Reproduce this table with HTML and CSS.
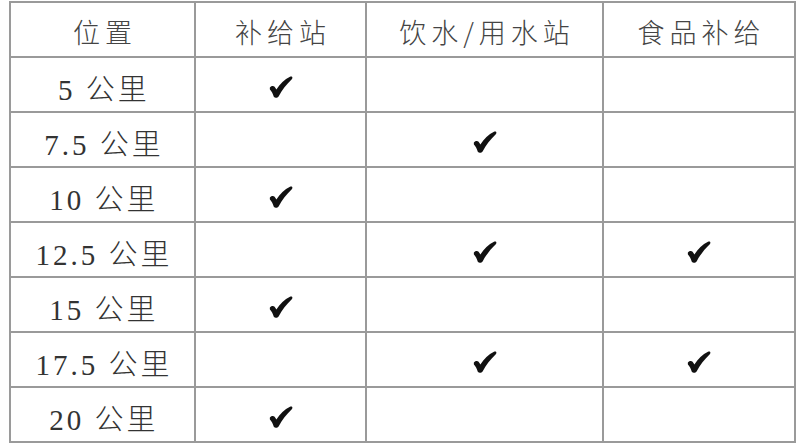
FILE: index.html
```html
<!DOCTYPE html>
<html lang="zh">
<head>
<meta charset="utf-8">
<link rel="stylesheet" href="styles.css">
</head>
<body>
<table class="grid">
  <colgroup>
    <col class="c-pos"><col class="c-sup"><col class="c-water"><col class="c-food">
  </colgroup>
  <thead>
    <tr><th>位置</th><th>补给站</th><th>饮水/用水站</th><th>食品补给</th></tr>
  </thead>
  <tbody>
    <tr><td class="lbl">5 公里</td><td><svg class="chk" viewBox="0 0 24 22"><path d="M0.8,11.8 C1.8,9.8 4.4,9.4 5.6,10.8 L7.4,13.4 C11,8 15.5,3.2 21,0.8 C23,0 24.2,1.6 22.8,3.2 C17.5,8.2 13,14 9.6,20.4 C8.6,22 6,22.4 4.8,20.8 C3.8,17.6 2.6,15 0.9,13.4 Z"/></svg></td><td></td><td></td></tr>
    <tr><td class="lbl">7.5 公里</td><td></td><td><svg class="chk" viewBox="0 0 24 22"><path d="M0.8,11.8 C1.8,9.8 4.4,9.4 5.6,10.8 L7.4,13.4 C11,8 15.5,3.2 21,0.8 C23,0 24.2,1.6 22.8,3.2 C17.5,8.2 13,14 9.6,20.4 C8.6,22 6,22.4 4.8,20.8 C3.8,17.6 2.6,15 0.9,13.4 Z"/></svg></td><td></td></tr>
    <tr><td class="lbl">10 公里</td><td><svg class="chk" viewBox="0 0 24 22"><path d="M0.8,11.8 C1.8,9.8 4.4,9.4 5.6,10.8 L7.4,13.4 C11,8 15.5,3.2 21,0.8 C23,0 24.2,1.6 22.8,3.2 C17.5,8.2 13,14 9.6,20.4 C8.6,22 6,22.4 4.8,20.8 C3.8,17.6 2.6,15 0.9,13.4 Z"/></svg></td><td></td><td></td></tr>
    <tr><td class="lbl">12.5 公里</td><td></td><td><svg class="chk" viewBox="0 0 24 22"><path d="M0.8,11.8 C1.8,9.8 4.4,9.4 5.6,10.8 L7.4,13.4 C11,8 15.5,3.2 21,0.8 C23,0 24.2,1.6 22.8,3.2 C17.5,8.2 13,14 9.6,20.4 C8.6,22 6,22.4 4.8,20.8 C3.8,17.6 2.6,15 0.9,13.4 Z"/></svg></td><td><svg class="chk" viewBox="0 0 24 22"><path d="M0.8,11.8 C1.8,9.8 4.4,9.4 5.6,10.8 L7.4,13.4 C11,8 15.5,3.2 21,0.8 C23,0 24.2,1.6 22.8,3.2 C17.5,8.2 13,14 9.6,20.4 C8.6,22 6,22.4 4.8,20.8 C3.8,17.6 2.6,15 0.9,13.4 Z"/></svg></td></tr>
    <tr><td class="lbl">15 公里</td><td><svg class="chk" viewBox="0 0 24 22"><path d="M0.8,11.8 C1.8,9.8 4.4,9.4 5.6,10.8 L7.4,13.4 C11,8 15.5,3.2 21,0.8 C23,0 24.2,1.6 22.8,3.2 C17.5,8.2 13,14 9.6,20.4 C8.6,22 6,22.4 4.8,20.8 C3.8,17.6 2.6,15 0.9,13.4 Z"/></svg></td><td></td><td></td></tr>
    <tr><td class="lbl">17.5 公里</td><td></td><td><svg class="chk" viewBox="0 0 24 22"><path d="M0.8,11.8 C1.8,9.8 4.4,9.4 5.6,10.8 L7.4,13.4 C11,8 15.5,3.2 21,0.8 C23,0 24.2,1.6 22.8,3.2 C17.5,8.2 13,14 9.6,20.4 C8.6,22 6,22.4 4.8,20.8 C3.8,17.6 2.6,15 0.9,13.4 Z"/></svg></td><td><svg class="chk" viewBox="0 0 24 22"><path d="M0.8,11.8 C1.8,9.8 4.4,9.4 5.6,10.8 L7.4,13.4 C11,8 15.5,3.2 21,0.8 C23,0 24.2,1.6 22.8,3.2 C17.5,8.2 13,14 9.6,20.4 C8.6,22 6,22.4 4.8,20.8 C3.8,17.6 2.6,15 0.9,13.4 Z"/></svg></td></tr>
    <tr><td class="lbl">20 公里</td><td><svg class="chk" viewBox="0 0 24 22"><path d="M0.8,11.8 C1.8,9.8 4.4,9.4 5.6,10.8 L7.4,13.4 C11,8 15.5,3.2 21,0.8 C23,0 24.2,1.6 22.8,3.2 C17.5,8.2 13,14 9.6,20.4 C8.6,22 6,22.4 4.8,20.8 C3.8,17.6 2.6,15 0.9,13.4 Z"/></svg></td><td></td><td></td></tr>
  </tbody>
</table>
</body>
</html>
```

FILE: styles.css
```css
html, body {
  margin: 0;
  padding: 0;
  background: #ffffff;
}

body {
  padding: 1px 0 0 9px;
}

.grid {
  border-collapse: collapse;
  table-layout: fixed;
  width: 787px;
  font-family: "Liberation Serif", "Noto Sans CJK SC", serif;
  color: #333333;
}

.c-pos { width: 185px; }
.c-sup { width: 171px; }
.c-water { width: 237px; }
.c-food { width: 192px; }

.grid th,
.grid td {
  border: 2px solid #9a9a9a;
  height: 49px;
  padding: 4px 0 0 0;
  text-align: center;
  vertical-align: middle;
}

.grid th {
  font-family: "Noto Sans CJK SC", sans-serif;
  font-weight: 300;
  font-size: 27px;
  letter-spacing: 5px;
  padding-left: 5px;
  color: #444444;
}

.grid td.lbl {
  font-size: 29px;
  font-weight: 300;
  letter-spacing: 3px;
  padding-left: 3px;
  color: #333333;
}

.chk {
  display: block;
  width: 24px;
  height: 22px;
  margin: 0 auto;
  fill: #111111;
}
```
